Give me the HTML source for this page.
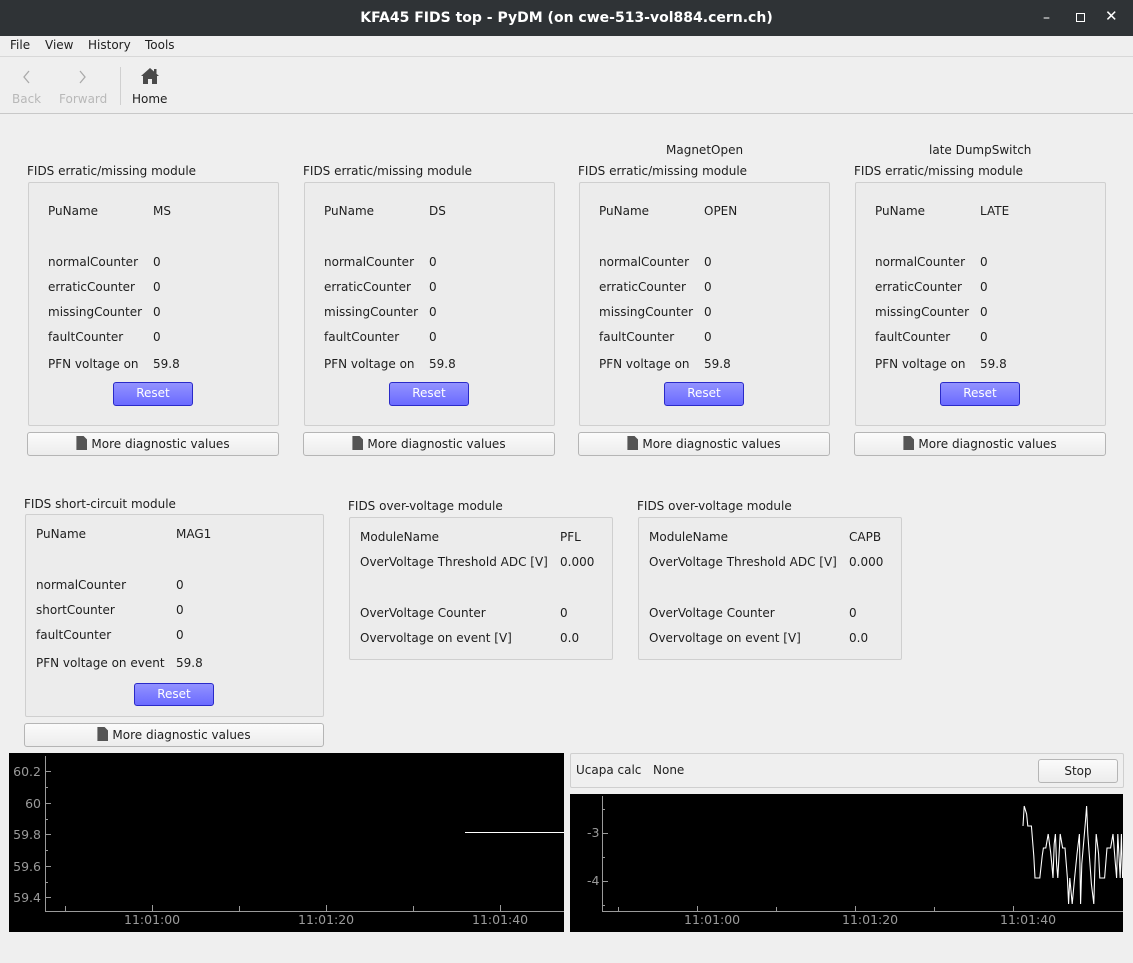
<!DOCTYPE html>
<html><head><meta charset="utf-8"><style>
*{box-sizing:border-box;margin:0;padding:0}
body{width:1133px;height:963px;background:#efefef;font-family:"DejaVu Sans","Liberation Sans",sans-serif;font-size:12px;color:#1e1e1e;position:relative;overflow:hidden}
.a{position:absolute;white-space:nowrap}
.title{left:0;top:0;width:1133px;height:36px;background:#2f3336;color:#fff;font-weight:bold;font-size:14px;text-align:center;line-height:36px}
.menu{left:0;top:36px;width:1133px;height:21px;background:#efefef;border-bottom:1px solid #d8d8d8}
.tb{left:0;top:57px;width:1133px;height:57px;background:#efefef;border-bottom:1px solid #c8c8c8}
.box{position:absolute;border:1px solid #cfcfcf;background:#ececec;border-radius:2px}
.btn{position:absolute;border:1px solid #b5b5b5;border-radius:3px;background:linear-gradient(#fbfbfb,#ececec);text-align:center;line-height:22px}
.reset{position:absolute;border:1px solid #2a2ac8;border-radius:3px;background:linear-gradient(#9393ff,#6a6aff);color:#fff;text-align:center;line-height:21px}
.doc{display:inline-block;width:11px;height:14px;background:#555;vertical-align:-2px;margin-right:4px;clip-path:polygon(0 0,65% 0,100% 28%,100% 100%,0 100%)}
.plot{position:absolute;background:#000}
.ax{color:#9a9a9a;font-size:12.5px}
</style></head><body>
<div class="a title">KFA45 FIDS top - PyDM (on cwe-513-vol884.cern.ch)</div>
<div class="a" style="left:1043px;top:10px;color:#fff;font-size:14px">–</div>
<div class="a" style="left:1076px;top:13px;width:9px;height:9px;border:1.5px solid #fff"></div>
<div class="a" style="left:1105px;top:7px;color:#fff;font-size:15px">✕</div>
<div class="a menu"><span class="a" style="left:10px;top:2px">File</span><span class="a" style="left:45px;top:2px">View</span><span class="a" style="left:88px;top:2px">History</span><span class="a" style="left:145px;top:2px">Tools</span></div>
<div class="a tb">
<svg class="a" style="left:22px;top:13px" width="10" height="14"><path d="M7 1 L2 7 L7 13" stroke="#aaa" stroke-width="1.3" fill="none"/></svg>
<svg class="a" style="left:78px;top:13px" width="10" height="14"><path d="M2 1 L7 7 L2 13" stroke="#aaa" stroke-width="1.3" fill="none"/></svg>
<span class="a" style="left:12px;top:35px;color:#b8b8b8">Back</span>
<span class="a" style="left:59px;top:35px;color:#b8b8b8">Forward</span>
<div class="a" style="left:120px;top:10px;width:1px;height:38px;background:#d0d0d0"></div>
<svg class="a" style="left:140px;top:10px" width="20" height="18" viewBox="0 0 20 18"><path d="M10 1 L1 9 L3 9 L3 17 L8 17 L8 12 L12 12 L12 17 L17 17 L17 9 L19 9 Z" fill="#4a4a4a"/><rect x="14" y="2" width="2.5" height="5" fill="#4a4a4a"/></svg>
<span class="a" style="left:132px;top:35px">Home</span>
</div>

<div class="a" style="left:666px;top:143px">MagnetOpen</div>
<div class="a" style="left:929px;top:143px">late DumpSwitch</div>

<div class="a" style="left:27px;top:164px">FIDS erratic/missing module</div>
<div class="box" style="left:28px;top:182px;width:251px;height:244px"></div>
<div class="a" style="left:48px;top:204px">PuName</div><div class="a" style="left:153px;top:204px">MS</div>
<div class="a" style="left:48px;top:255px">normalCounter</div><div class="a" style="left:153px;top:255px">0</div>
<div class="a" style="left:48px;top:280px">erraticCounter</div><div class="a" style="left:153px;top:280px">0</div>
<div class="a" style="left:48px;top:305px">missingCounter</div><div class="a" style="left:153px;top:305px">0</div>
<div class="a" style="left:48px;top:330px">faultCounter</div><div class="a" style="left:153px;top:330px">0</div>
<div class="a" style="left:48px;top:357px">PFN voltage on</div><div class="a" style="left:153px;top:357px">59.8</div>
<div class="reset" style="left:113px;top:382px;width:80px;height:24px">Reset</div>
<div class="btn" style="left:27px;top:432px;width:252px;height:24px"><span class="doc"></span>More diagnostic values</div>

<div class="a" style="left:303px;top:164px">FIDS erratic/missing module</div>
<div class="box" style="left:304px;top:182px;width:251px;height:244px"></div>
<div class="a" style="left:324px;top:204px">PuName</div><div class="a" style="left:429px;top:204px">DS</div>
<div class="a" style="left:324px;top:255px">normalCounter</div><div class="a" style="left:429px;top:255px">0</div>
<div class="a" style="left:324px;top:280px">erraticCounter</div><div class="a" style="left:429px;top:280px">0</div>
<div class="a" style="left:324px;top:305px">missingCounter</div><div class="a" style="left:429px;top:305px">0</div>
<div class="a" style="left:324px;top:330px">faultCounter</div><div class="a" style="left:429px;top:330px">0</div>
<div class="a" style="left:324px;top:357px">PFN voltage on</div><div class="a" style="left:429px;top:357px">59.8</div>
<div class="reset" style="left:389px;top:382px;width:80px;height:24px">Reset</div>
<div class="btn" style="left:303px;top:432px;width:252px;height:24px"><span class="doc"></span>More diagnostic values</div>

<div class="a" style="left:578px;top:164px">FIDS erratic/missing module</div>
<div class="box" style="left:579px;top:182px;width:251px;height:244px"></div>
<div class="a" style="left:599px;top:204px">PuName</div><div class="a" style="left:704px;top:204px">OPEN</div>
<div class="a" style="left:599px;top:255px">normalCounter</div><div class="a" style="left:704px;top:255px">0</div>
<div class="a" style="left:599px;top:280px">erraticCounter</div><div class="a" style="left:704px;top:280px">0</div>
<div class="a" style="left:599px;top:305px">missingCounter</div><div class="a" style="left:704px;top:305px">0</div>
<div class="a" style="left:599px;top:330px">faultCounter</div><div class="a" style="left:704px;top:330px">0</div>
<div class="a" style="left:599px;top:357px">PFN voltage on</div><div class="a" style="left:704px;top:357px">59.8</div>
<div class="reset" style="left:664px;top:382px;width:80px;height:24px">Reset</div>
<div class="btn" style="left:578px;top:432px;width:252px;height:24px"><span class="doc"></span>More diagnostic values</div>

<div class="a" style="left:854px;top:164px">FIDS erratic/missing module</div>
<div class="box" style="left:855px;top:182px;width:251px;height:244px"></div>
<div class="a" style="left:875px;top:204px">PuName</div><div class="a" style="left:980px;top:204px">LATE</div>
<div class="a" style="left:875px;top:255px">normalCounter</div><div class="a" style="left:980px;top:255px">0</div>
<div class="a" style="left:875px;top:280px">erraticCounter</div><div class="a" style="left:980px;top:280px">0</div>
<div class="a" style="left:875px;top:305px">missingCounter</div><div class="a" style="left:980px;top:305px">0</div>
<div class="a" style="left:875px;top:330px">faultCounter</div><div class="a" style="left:980px;top:330px">0</div>
<div class="a" style="left:875px;top:357px">PFN voltage on</div><div class="a" style="left:980px;top:357px">59.8</div>
<div class="reset" style="left:940px;top:382px;width:80px;height:24px">Reset</div>
<div class="btn" style="left:854px;top:432px;width:252px;height:24px"><span class="doc"></span>More diagnostic values</div>

<div class="a" style="left:24px;top:497px">FIDS short-circuit module</div>
<div class="box" style="left:25px;top:514px;width:299px;height:203px"></div>
<div class="a" style="left:36px;top:527px">PuName</div><div class="a" style="left:176px;top:527px">MAG1</div>
<div class="a" style="left:36px;top:578px">normalCounter</div><div class="a" style="left:176px;top:578px">0</div>
<div class="a" style="left:36px;top:603px">shortCounter</div><div class="a" style="left:176px;top:603px">0</div>
<div class="a" style="left:36px;top:628px">faultCounter</div><div class="a" style="left:176px;top:628px">0</div>
<div class="a" style="left:36px;top:656px">PFN voltage on event</div><div class="a" style="left:176px;top:656px">59.8</div>
<div class="reset" style="left:134px;top:683px;width:80px;height:23px">Reset</div>
<div class="btn" style="left:24px;top:723px;width:300px;height:24px"><span class="doc"></span>More diagnostic values</div>

<div class="a" style="left:348px;top:499px">FIDS over-voltage module</div>
<div class="box" style="left:349px;top:517px;width:264px;height:143px"></div>
<div class="a" style="left:360px;top:530px">ModuleName</div><div class="a" style="left:560px;top:530px">PFL</div>
<div class="a" style="left:360px;top:555px">OverVoltage Threshold ADC [V]</div><div class="a" style="left:560px;top:555px">0.000</div>
<div class="a" style="left:360px;top:606px">OverVoltage Counter</div><div class="a" style="left:560px;top:606px">0</div>
<div class="a" style="left:360px;top:631px">Overvoltage on event [V]</div><div class="a" style="left:560px;top:631px">0.0</div>

<div class="a" style="left:637px;top:499px">FIDS over-voltage module</div>
<div class="box" style="left:638px;top:517px;width:264px;height:143px"></div>
<div class="a" style="left:649px;top:530px">ModuleName</div><div class="a" style="left:849px;top:530px">CAPB</div>
<div class="a" style="left:649px;top:555px">OverVoltage Threshold ADC [V]</div><div class="a" style="left:849px;top:555px">0.000</div>
<div class="a" style="left:649px;top:606px">OverVoltage Counter</div><div class="a" style="left:849px;top:606px">0</div>
<div class="a" style="left:649px;top:631px">Overvoltage on event [V]</div><div class="a" style="left:849px;top:631px">0.0</div>

<div class="plot" style="left:9px;top:753px;width:555px;height:179px">
<svg width="555" height="179" style="position:absolute;left:0;top:0">
<g stroke="#9a9a9a" stroke-width="1" fill="none">
<path d="M36.5 3 V158.5 H555"/>
<path d="M36 18.5h6M36 50.5h6M36 81.5h6M36 113.5h6M36 144.5h6M36 34.5h3M36 66.5h3M36 97.5h3M36 129.5h3"/>
<path d="M56.5 158v-5M143.5 158v-6M230.5 158v-5M317.5 158v-6M404.5 158v-5M491.5 158v-6"/>
</g>
<path d="M456 79.5H555" stroke="#fff" stroke-width="1"/>
</svg>
<div class="a ax" style="right:523px;top:11px">60.2</div>
<div class="a ax" style="right:523px;top:43px">60</div>
<div class="a ax" style="right:523px;top:74px">59.8</div>
<div class="a ax" style="right:523px;top:106px">59.6</div>
<div class="a ax" style="right:523px;top:137px">59.4</div>
<div class="a ax" style="left:115px;top:159px">11:01:00</div>
<div class="a ax" style="left:289px;top:159px">11:01:20</div>
<div class="a ax" style="left:463px;top:159px">11:01:40</div>
</div>

<div class="box" style="left:570px;top:753px;width:554px;height:35px;background:#efefef"></div>
<div class="a" style="left:576px;top:763px">Ucapa calc</div>
<div class="a" style="left:653px;top:763px">None</div>
<div class="btn" style="left:1038px;top:759px;width:80px;height:24px">Stop</div>

<div class="plot" style="left:570px;top:794px;width:553px;height:138px">
<svg width="553" height="138" style="position:absolute;left:0;top:0">
<g stroke="#9a9a9a" stroke-width="1" fill="none">
<path d="M32.5 2 V117.5 H553"/>
<path d="M32 39.5h6M32 87.5h6M32 15.5h3M32 63.5h3M32 111.5h3"/>
<path d="M48.5 117v-4M127.5 117v-5M206.5 117v-4M285.5 117v-5M364.5 117v-4M443.5 117v-5"/>
</g>
<g transform="translate(453,0) scale(1.2,1) translate(-453,0)">
<polyline fill="none" stroke="#fff" stroke-width="0.9" points="453,32 454,12 456,20 457,32 460,32 462,62 463,84 467,84 469,62 470,54 472,54 474,40 476,58 477,70 478,84 479,50 480,40 481,70 482,84 484,40 486,54 488,54 490,84 491,110 492,84 494,110 496,84 498,60 500,40 501,110 502,70 505,28 506,12 507,40 510,90 512,110 513,70 514,40 516,60 517,84 521,84 523,54 526,54 528,40 530,70 531,84 532,40 534,84 535,40 536,84"/>
</g>
</svg>
<div class="a ax" style="left:17px;top:31px">-3</div>
<div class="a ax" style="left:17px;top:79px">-4</div>
<div class="a ax" style="left:114px;top:118px">11:01:00</div>
<div class="a ax" style="left:272px;top:118px">11:01:20</div>
<div class="a ax" style="left:430px;top:118px">11:01:40</div>
</div>
</body></html>
